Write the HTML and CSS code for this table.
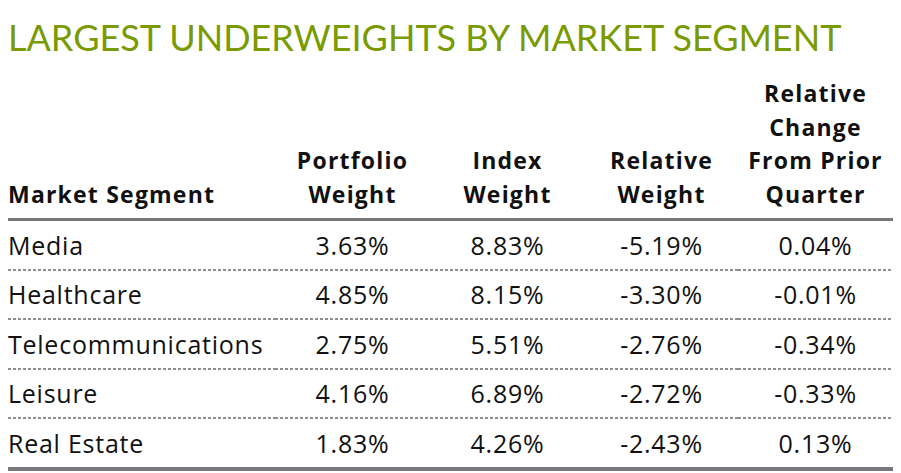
FILE: index.html
```html
<!DOCTYPE html>
<html>
<head>
<meta charset="utf-8">
<link rel="stylesheet" href="styles.css">
</head>
<body>
<div class="page">
  <h1 class="title">LARGEST UNDERWEIGHTS BY MARKET SEGMENT</h1>
  <table class="grid">
    <colgroup>
      <col class="c-seg"><col class="c-num"><col class="c-num"><col class="c-num2"><col class="c-num">
    </colgroup>
    <thead>
      <tr>
        <th class="left">Market Segment</th>
        <th>Portfolio<br>Weight</th>
        <th>Index<br>Weight</th>
        <th>Relative<br>Weight</th>
        <th>Relative<br>Change<br>From Prior<br>Quarter</th>
      </tr>
    </thead>
    <tbody>
      <tr><td class="left">Media</td><td>3.63%</td><td>8.83%</td><td>-5.19%</td><td>0.04%</td></tr>
      <tr><td class="left">Healthcare</td><td>4.85%</td><td>8.15%</td><td>-3.30%</td><td>-0.01%</td></tr>
      <tr><td class="left">Telecommunications</td><td>2.75%</td><td>5.51%</td><td>-2.76%</td><td>-0.34%</td></tr>
      <tr><td class="left">Leisure</td><td>4.16%</td><td>6.89%</td><td>-2.72%</td><td>-0.33%</td></tr>
      <tr class="last"><td class="left">Real Estate</td><td>1.83%</td><td>4.26%</td><td>-2.43%</td><td>0.13%</td></tr>
    </tbody>
  </table>
</div>
</body>
</html>
```
FILE: styles.css
```css
html, body { margin: 0; padding: 0; background: #ffffff; }
.page {
  padding: 0 8px;
  font-family: "Open Sans", "Liberation Sans", sans-serif;
  color: #111111;
}
.title {
  margin: 0;
  padding-top: 17px;
  font-family: "Lato", "Liberation Sans", sans-serif;
  font-size: 36px;
  line-height: 40px;
  font-weight: 400;
  color: #7a9a01;
}
.grid {
  width: 885px;
  border-collapse: collapse;
  margin-top: 20px;
  table-layout: fixed;
}
.c-seg { width: 267px; }
.c-num { width: 155px; }
.c-num2 { width: 153px; }
.grid th {
  font-size: 23px;
  font-weight: 700;
  line-height: 33.5px;
  letter-spacing: 1.2px;
  text-align: center;
  vertical-align: bottom;
  padding: 0 0 7px 0;
  border-bottom: 3px solid #77787b;
}
.grid td {
  font-size: 25px;
  font-weight: 400;
  line-height: 30px;
  letter-spacing: 0.75px;
  height: 47.5px;
  padding: 0 0 2px 0;
  text-align: center;
  vertical-align: middle;
  background-image: linear-gradient(to right, #8e8f93 0 3px, transparent 3px 5px);
  background-size: 5px 2px;
  background-repeat: repeat-x;
  background-position: left bottom;
}
.grid .left { text-align: left; }
.grid tr.last td {
  background-image: none;
  border-bottom: 4px solid #77787b;
  padding-bottom: 0;
}
```
